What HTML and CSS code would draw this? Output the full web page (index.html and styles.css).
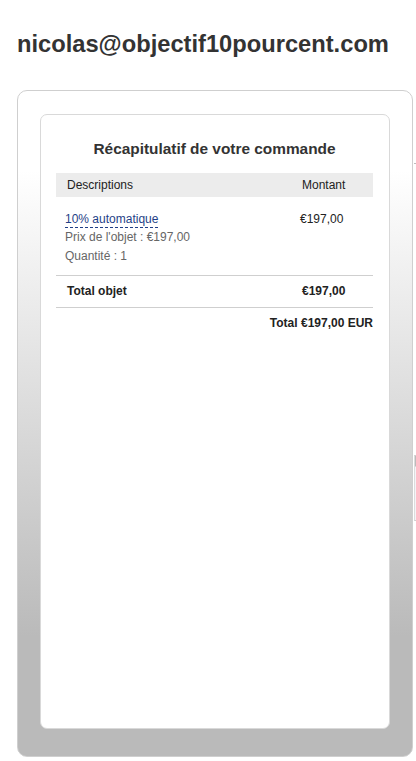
FILE: index.html
```html
<!DOCTYPE html>
<html lang="fr">
<head>
<meta charset="utf-8">
<title>Récapitulatif</title>
<link rel="stylesheet" href="styles.css">
</head>
<body>
<h1 class="email">nicolas@objectif10pourcent.com</h1>
<div class="layout">
  <div class="panel">
    <div class="card">
      <h2 class="card-title">Récapitulatif de votre commande</h2>
      <div class="table">
        <div class="thead">
          <span class="col-desc">Descriptions</span>
          <span class="col-amt">Montant</span>
        </div>
        <div class="item">
          <div class="col-desc">
            <a class="item-name">10% automatique</a>
            <div class="item-meta">Prix de l'objet : €197,00</div>
            <div class="item-meta">Quantité : 1</div>
          </div>
          <div class="col-amt item-price">€197,00</div>
        </div>
        <div class="subtotal">
          <span class="col-desc">Total objet</span>
          <span class="col-amt">€197,00</span>
        </div>
        <div class="grand-total">Total €197,00 EUR</div>
      </div>
    </div>
  </div>
  <div class="side">
    <div class="side-line"></div>
    <div class="side-box"></div>
  </div>
</div>
</body>
</html>
```

FILE: styles.css
```css
html, body {
  margin: 0;
  padding: 0;
  background: #fff;
  overflow: hidden;
}
body {
  font-family: "Liberation Sans", Arial, sans-serif;
  color: #333;
  width: 416px;
  height: 761px;
}
.email {
  margin: 0;
  padding: 30px 0 0 17px;
  font-size: 23.7px;
  line-height: 28px;
  font-weight: bold;
  color: #333;
  letter-spacing: 0;
}
.layout {
  display: flex;
  margin-top: 32px;
  margin-left: 17px;
}
.panel {
  box-sizing: border-box;
  flex: 0 0 396px;
  height: 667px;
  border: 1px solid #cfcfcf;
  border-radius: 10px;
  background: linear-gradient(to bottom, #fff 12%, #bababa 82%, #bababa 100%);
  padding: 23px 22px 27px 22px;
  display: flex;
}
.card {
  box-sizing: border-box;
  flex: 1;
  background: #fff;
  border: 1px solid #d9d9d9;
  border-radius: 7px;
  padding: 0 16px 0 15px;
}
.card-title {
  margin: 24px 0 0;
  text-align: center;
  font-size: 15.4px;
  line-height: 20px;
  font-weight: bold;
  color: #333;
}
.table {
  margin-top: 14px;
  font-size: 12px;
  color: #222;
}
.thead, .item, .subtotal {
  display: grid;
  grid-template-columns: 1fr 73px;
}
.thead {
  background: #ececec;
  height: 24px;
  line-height: 24px;
  padding-left: 11px;
}
.thead .col-amt {
  margin-left: 2px;
}
.item {
  padding: 15px 0 10px 9px;
  border-bottom: 1px solid #cfcfcf;
}
.item-name {
  color: #1f3f87;
  text-decoration: none;
  border-bottom: 1px dashed #1f3f87;
  line-height: 15px;
  display: inline-block;
}
.item-meta {
  color: #666;
  line-height: 18.5px;
}
.item-price {
  margin-left: 0;
  line-height: 14px;
}
.subtotal {
  padding-left: 11px;
  height: 31px;
  line-height: 31px;
  font-weight: bold;
  border-bottom: 1px solid #cfcfcf;
}
.subtotal .col-amt {
  margin-left: 2px;
}
.grand-total {
  text-align: right;
  font-weight: bold;
  line-height: 30px;
}
.side {
  flex: 0 0 2px;
  margin-left: 1px;
}
.side-line {
  margin-top: 73px;
  height: 1px;
  background: #bdbdbd;
}
.side-box {
  margin-top: 291px;
  height: 64px;
  border-top: 1px solid #cfcfcf;
  border-bottom: 1px solid #cfcfcf;
  border-left: 1px solid #dcdcdc;
  background: linear-gradient(to bottom, #bbb 0 10px, #f3f4f7 11px);
}
```
